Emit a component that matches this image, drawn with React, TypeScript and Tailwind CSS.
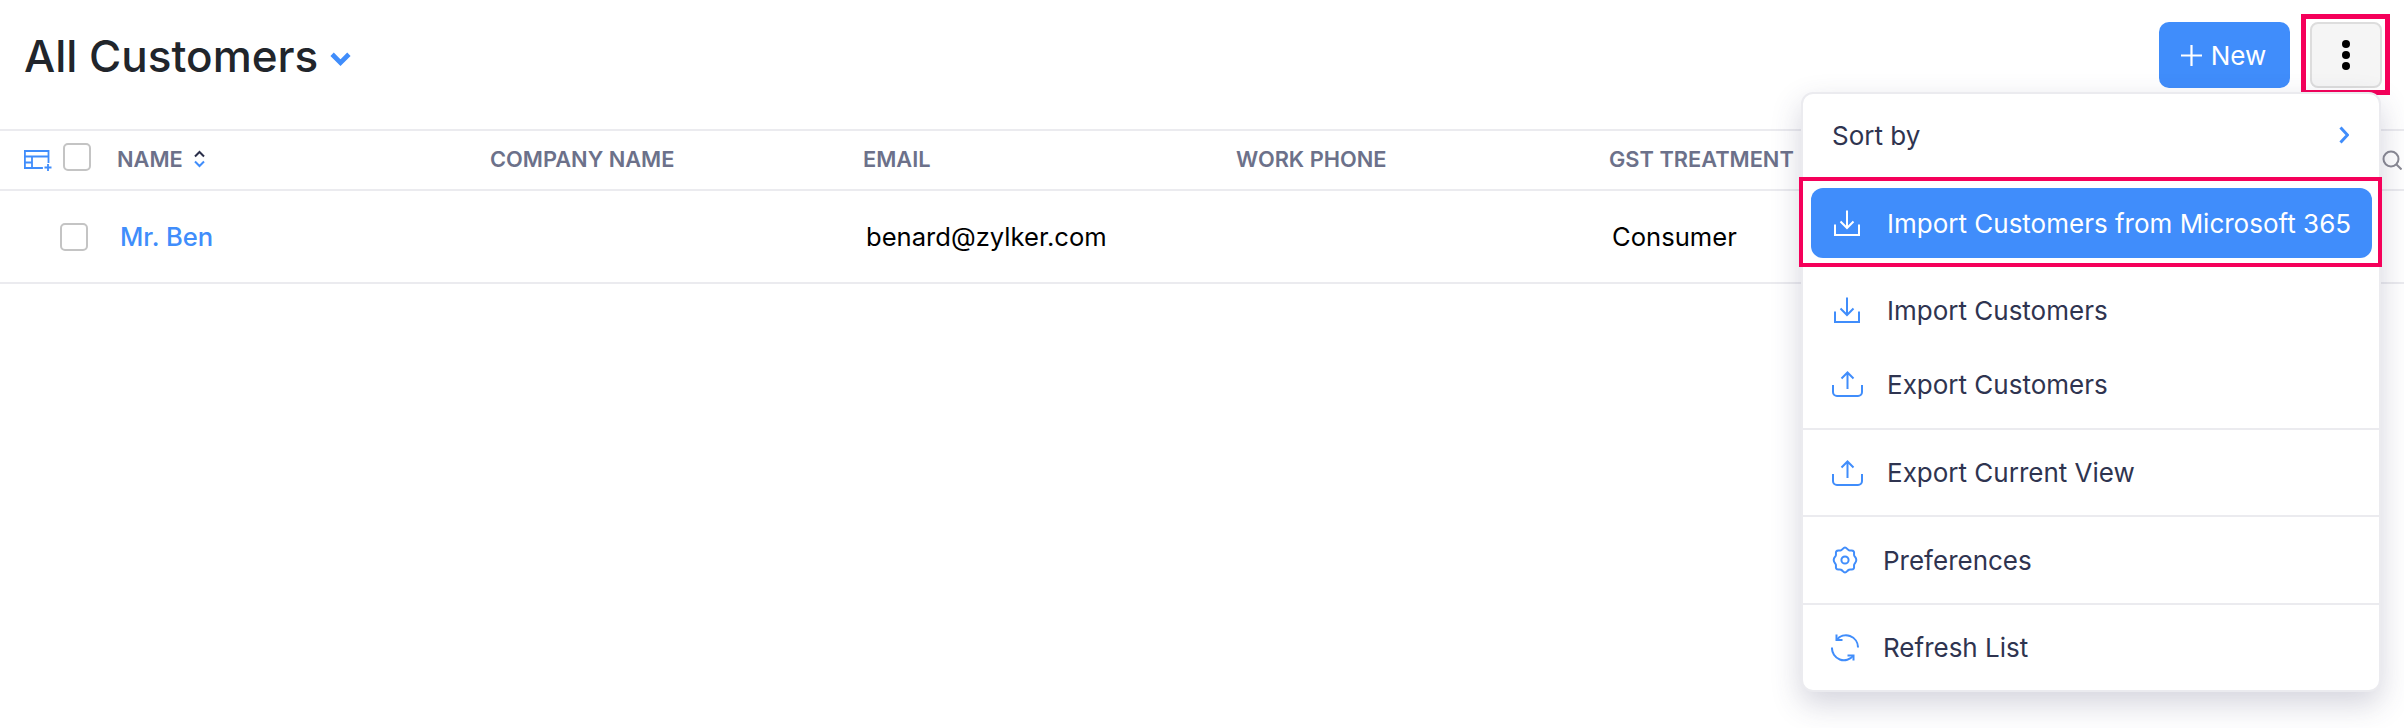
import React from 'react';

function ImportIcon({ className }: { className: string }) {
  return (
    <svg viewBox="0 0 26 26" fill="none" stroke="currentColor" strokeWidth="2" className={`shrink-0 ${className}`}>
      <path d="M13 0.500v17M6.500 11.500l6.500 6.500 6.500-6.500" />
      <path d="M1 14.500v10.500h24v-10.500" />
    </svg>
  );
}

function ExportIcon({ className }: { className: string }) {
  return (
    <svg viewBox="0 0 31 26" fill="none" stroke="currentColor" strokeWidth="2" className={`shrink-0 ${className}`}>
      <path d="M15.500 18V1.500M9.500 7.500l6-6 6 6" />
      <path d="M1 14v7a4 4 0 0 0 4 4h21a4 4 0 0 0 4-4v-7" />
    </svg>
  );
}

function GearIcon() {
  return (
    <svg viewBox="0 0 24 28" fill="none" stroke="currentColor" strokeWidth="2" className="shrink-0 w-[26px] h-[28px] text-[#408dfb]">
      <path d="M12 1.500c1.800 0 2.300 2.200 4 2.800 1.900.6 3.500-.6 4.700 1 1 1.400-.2 3 .6 4.500.6 1.300 2 1.900 2 4.200s-1.400 2.900-2 4.200c-.8 1.500.4 3.100-.6 4.500-1.200 1.600-2.800.4-4.700 1-1.700.6-2.200 2.800-4 2.800s-2.300-2.200-4-2.800c-1.900-.6-3.500.6-4.700-1-1-1.400.2-3-.6-4.500-.6-1.300-2-1.900-2-4.200s1.400-2.900 2-4.200c.8-1.500-.4-3.100.6-4.500 1.200-1.600 2.800-.4 4.700-1 1.700-.6 2.200-2.800 4-2.800z" />
      <circle cx="12" cy="14" r="3.600" />
    </svg>
  );
}

function RefreshIcon() {
  return (
    <svg viewBox="0 0 28 29" fill="none" stroke="currentColor" strokeWidth="2" className="shrink-0 w-[28px] h-[29px] text-[#408dfb]">
      <path d="M5.500 7a12 12 0 0 1 21.500 7.500" />
      <path d="M5.500 1.500v5.500h6" />
      <path d="M1 14.500a12 12 0 0 0 21.500 8" />
      <path d="M22.500 27.500v-5h-6" />
    </svg>
  );
}

function TableAddIcon() {
  return (
    <svg viewBox="0 0 28 21" fill="none" stroke="#408dfb" strokeWidth="1.800" className="shrink-0 w-[28px] h-[21px]">
      <path d="M24.500 13V1H0.900v17h18" />
      <path d="M0.900 6.500h23.600M8 6.500v11.500M0.900 12.500H8" />
      <path d="M24 14v7M20.500 17.500h7" />
    </svg>
  );
}

function SortIcon() {
  return (
    <svg viewBox="0 0 11 18" fill="none" strokeWidth="2" className="w-[11px] h-[18px]">
      <path d="M1 6.500l4.500-4.500L10 6.500" stroke="#2b2f4a" />
      <path d="M1 11.500L5.500 16l4.500-4.500" stroke="#408dfb" />
    </svg>
  );
}

function Checkbox({ className }: { className: string }) {
  return <span className={`block w-[28px] h-[28px] rounded-[5px] border-2 border-[#c4c4c4] bg-white ${className}`} />;
}

const columns = ['Company Name', 'Email', 'Work Phone', 'GST Treatment'];

export default function App() {
  return (
    <div className="relative h-[728px] overflow-hidden bg-white font-['Inter',sans-serif] text-[#21263c]">
      {/* page title and actions */}
      <div className="h-[129px] flex items-start justify-between pl-[24px] pr-[22px] pt-[22px]">
        <div className="flex items-center h-[66px]">
          <h1 className="text-[44px] font-medium text-[#21252b] leading-none mt-[2px]">All Customers</h1>
          <svg viewBox="0 0 20 13" fill="none" stroke="#408dfb" strokeWidth="4.500" className="w-[21px] h-[14px] ml-[12px] mt-[8px]">
            <path d="M2 2l8 8 8-8" />
          </svg>
        </div>
        <div className="flex gap-[20px]">
          <button className="w-[131px] h-[66px] rounded-[10px] bg-[#408dfb] text-white text-[26px] flex items-center justify-center gap-[9px] pr-[2px]">
            <svg viewBox="0 0 21 21" fill="none" stroke="currentColor" strokeWidth="2.200" className="w-[21px] h-[21px]">
              <path d="M10.500 0v21M0 10.500h21" />
            </svg>
            New
          </button>
          <div className="relative">
            <button className="w-[72px] h-[66px] rounded-[8px] bg-[#f5f5f5] border-2 border-[#dddddd] flex flex-col items-center justify-center gap-[3px]">
              <span className="w-[8px] h-[8px] rounded-full bg-black" />
              <span className="w-[8px] h-[8px] rounded-full bg-black" />
              <span className="w-[8px] h-[8px] rounded-full bg-black" />
            </button>
            <div className="absolute left-[-9px] top-[-8px] w-[89px] h-[81px] border-[5px] border-[#f5005a]" />
          </div>
        </div>
      </div>

      {/* table */}
      <div className="border-t-2 border-[#ebebef]">
        <div className="h-[58px] flex items-center border-b-2 border-[#ebebef] box-content">
          <div className="w-[117px] flex items-center shrink-0 pl-[24px]">
            <TableAddIcon />
            <Checkbox className="ml-[11px] -mt-[6px]" />
          </div>
          <div className="w-[373px] shrink-0 flex items-center gap-[11px] text-[21.8px] font-semibold text-[#6c718a] uppercase -mt-[2px]">
            Name
            <SortIcon />
          </div>
          {columns.map((col) => (
            <div key={col} className="w-[373px] shrink-0 whitespace-nowrap text-[21.8px] font-semibold text-[#6c718a] uppercase -mt-[2px]">
              {col}
            </div>
          ))}
        </div>
        <div className="h-[91px] flex items-center border-b-2 border-[#ebebef] box-content text-[25.6px] text-black">
          <div className="w-[120px] shrink-0 pl-[60px]">
            <Checkbox className="" />
          </div>
          <div className="w-[745px] shrink-0 text-[#408dfb] font-medium pt-[2px]">Mr. Ben</div>
          <div className="w-[747px] shrink-0 pl-[1px] pt-[2px]">benard@zylker.com</div>
          <div className="shrink-0 pt-[2px]">Consumer</div>
        </div>
      </div>

      <svg viewBox="0 0 20 20" fill="none" stroke="#8a8a94" strokeWidth="2" className="absolute left-[2382px] top-[150px] w-[20px] h-[20px]">
        <circle cx="9" cy="9" r="7.500" />
        <path d="M14.500 14.500l5 5" />
      </svg>

      {/* actions menu */}
      <div className="absolute left-[1801px] top-[92px] w-[580px] h-[600px] bg-white rounded-[12px] border-2 border-[#ebebef] shadow-[0_12px_30px_rgba(60,60,100,0.22)] text-[26px] text-[#2f3450]">
        <div className="h-[82px] flex items-center justify-between pl-[29px] pr-[30px]">
          Sort by
          <svg viewBox="0 0 10 18" fill="none" stroke="#408dfb" strokeWidth="3" className="w-[10px] h-[18px]">
            <path d="M1.500 1.500L8.500 9l-7 7.500" />
          </svg>
        </div>
        <div className="relative mt-[12px] ml-[8px] w-[561px] h-[70px] rounded-[12px] bg-[#408dfb] text-white flex items-center pl-[23px]">
          <ImportIcon className="w-[26px] h-[26px]" />
          <span className="ml-[27px] whitespace-nowrap">Import Customers from Microsoft 365</span>
          <div className="absolute left-[-12px] top-[-11px] w-[583px] h-[90px] border-x-[4px] border-y-[4px] border-[#f5005a]" />
        </div>
        <div className="mt-[15px] h-[74px] flex items-center pl-[31px]">
          <ImportIcon className="w-[26px] h-[26px] text-[#408dfb]" />
          <span className="ml-[27px]">Import Customers</span>
        </div>
        <div className="h-[74px] flex items-center pl-[29px] mb-[7px]">
          <ExportIcon className="w-[31px] h-[26px] text-[#408dfb]" />
          <span className="ml-[24px]">Export Customers</span>
        </div>
        <div className="h-[87px] flex items-center pl-[29px] border-t-2 border-[#ebebef]">
          <ExportIcon className="w-[31px] h-[26px] text-[#408dfb]" />
          <span className="ml-[24px]">Export Current View</span>
        </div>
        <div className="h-[88px] flex items-center pl-[29px] border-t-2 border-[#ebebef]">
          <GearIcon />
          <span className="ml-[25px]">Preferences</span>
        </div>
        <div className="h-[87px] flex items-center pl-[28px] border-t-2 border-[#ebebef]">
          <RefreshIcon />
          <span className="ml-[24px]">Refresh List</span>
        </div>
      </div>
    </div>
  );
}
